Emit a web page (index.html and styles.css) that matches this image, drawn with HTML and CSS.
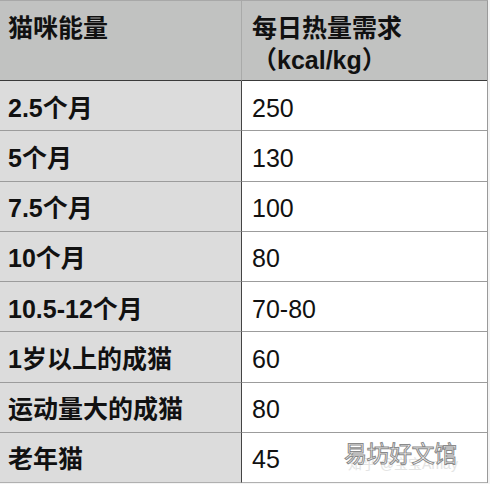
FILE: index.html
```html
<!DOCTYPE html>
<html lang="zh">
<head>
<meta charset="utf-8">
<title>猫咪能量</title>
<link rel="stylesheet" href="styles.css">
</head>
<body>
<div class="sheet">
  <div class="cell head left">猫咪能量</div>
  <div class="cell head right">每日热量需求（kcal/kg）</div>

  <div class="cell label">2.5个月</div>
  <div class="cell value">250</div>

  <div class="cell label">5个月</div>
  <div class="cell value">130</div>

  <div class="cell label">7.5个月</div>
  <div class="cell value">100</div>

  <div class="cell label">10个月</div>
  <div class="cell value">80</div>

  <div class="cell label">10.5-12个月</div>
  <div class="cell value">70-80</div>

  <div class="cell label">1岁以上的成猫</div>
  <div class="cell value">60</div>

  <div class="cell label">运动量大的成猫</div>
  <div class="cell value">80</div>

  <div class="cell label last">老年猫</div>
  <div class="cell value last">45
    <div class="watermark">
      <span class="wm-sub">知乎 @宝宝Amay</span>
      <span class="wm-main">易坊好文馆</span>
    </div>
  </div>
</div>
</body>
</html>
```
FILE: styles.css
```css
html, body {
  margin: 0;
  padding: 0;
  background: #f4f4f4;
}
body {
  width: 490px;
  height: 484px;
  overflow: hidden;
  font-family: "Liberation Sans", "Noto Sans CJK SC", sans-serif;
  color: #111;
}
.sheet {
  display: grid;
  grid-template-columns: 242px 245px;
  grid-template-rows: 80px repeat(8, 50.25px);
  border-top: 1px solid #a8a8a8;
  border-right: 1px solid #9a9a9a;
  width: 488px;
  box-sizing: border-box;
}
.cell {
  font-size: 25px;
  line-height: 26px;
  box-sizing: border-box;
  border-bottom: 1px solid #9c9c9c;
  display: flex;
  align-items: center;
  padding-top: 4px;
  white-space: nowrap;
}
.head {
  background: #c1c2c1;
  font-weight: bold;
  align-items: flex-start;
  padding-top: 11px;
  line-height: 32px;
  border-bottom: 1px solid #3a3a3a;
  white-space: normal;
}
.head.left {
  padding-left: 8px;
  border-right: 1px solid #a9aaa9;
}
.head.right {
  padding-left: 10px;
  padding-right: 40px;
}
.label {
  background: #dcdcdc;
  font-weight: bold;
  padding-left: 8px;
  border-right: 1px solid #444;
}
.value {
  background: #ffffff;
  padding-left: 10px;
  position: relative;
}
.last {
  border-bottom-color: #b0b0b0;
}
.watermark {
  position: absolute;
  left: 102px;
  top: 6px;
  width: 140px;
  height: 40px;
}
.wm-main {
  position: absolute;
  left: 0;
  top: 0;
  font-family: "Noto Sans CJK SC", sans-serif;
  font-size: 23px;
  line-height: 26px;
  color: #ffffff;
  -webkit-text-stroke: 1px #8a8a8a;
  letter-spacing: -0.5px;
}
.wm-sub {
  position: absolute;
  left: 4px;
  top: 17px;
  font-size: 14px;
  line-height: 16px;
  color: #e4e4e4;
}
```
